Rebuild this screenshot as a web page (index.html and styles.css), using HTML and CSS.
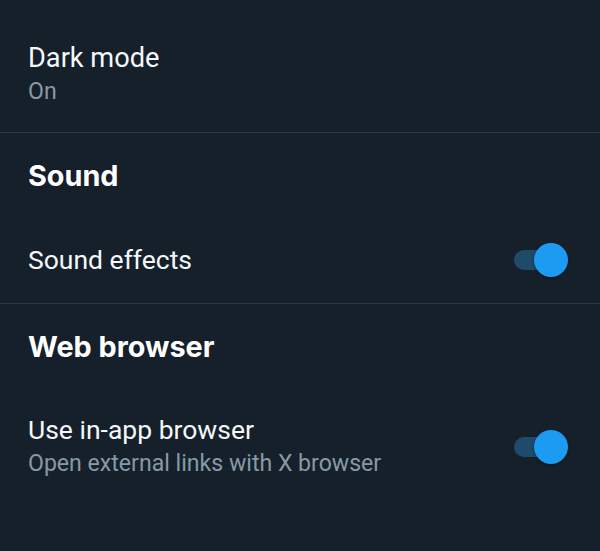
FILE: index.html
```html
<!DOCTYPE html>
<html>
<head>
<meta charset="utf-8">
<link rel="stylesheet" href="styles.css">
</head>
<body>
<div class="page">
  <div class="row row-first">
    <div class="text">
      <div class="title title-lg">Dark mode</div>
      <div class="sub">On</div>
    </div>
  </div>
  <div class="divider"></div>
  <div class="header">Sound</div>
  <div class="row row-toggle">
    <div class="text">
      <div class="title">Sound effects</div>
    </div>
    <div class="toggle"><div class="track"></div><div class="knob"></div></div>
  </div>
  <div class="divider"></div>
  <div class="header">Web browser</div>
  <div class="row row-toggle row-two">
    <div class="text">
      <div class="title">Use in-app browser</div>
      <div class="sub">Open external links with X browser</div>
    </div>
    <div class="toggle"><div class="track"></div><div class="knob"></div></div>
  </div>
</div>
</body>
</html>
```
FILE: styles.css
```css
html, body {
  margin: 0;
  padding: 0;
  background: #15202b;
}
body {
  width: 600px;
  height: 551px;
  overflow: hidden;
  font-family: Roboto, "Noto Sans", sans-serif;
  color: #ffffff;
}
.page {
  display: flex;
  flex-direction: column;
}
.row {
  display: flex;
  align-items: center;
  justify-content: space-between;
  padding: 0 32px 0 28px;
}
.row-first {
  height: 132px;
  align-items: flex-start;
}
.row-first .text {
  padding-top: 41px;
}
.title {
  font-size: 26.5px;
  line-height: 34px;
  color: #f5f8fa;
}
.title-lg {
  font-size: 27.2px;
}
.sub {
  font-size: 23.1px;
  line-height: 34px;
  color: #8899a6;
}
.divider {
  height: 1px;
  background: #2b3844;
}
.header {
  height: 84px;
  display: flex;
  align-items: center;
  padding-left: 28px;
  font-family: Inter, Roboto, sans-serif;
  font-size: 28.8px;
  font-weight: 700;
  color: #ffffff;
}
.row-toggle {
  height: 86px;
}
.row-two {
  height: 118px;
}
.toggle {
  position: relative;
  width: 54px;
  height: 34px;
  flex: none;
}
.track {
  position: absolute;
  left: 0;
  top: 7px;
  width: 46px;
  height: 20px;
  border-radius: 10px;
  background: #1e4a6b;
}
.knob {
  position: absolute;
  right: 0;
  top: 0;
  width: 34px;
  height: 34px;
  border-radius: 50%;
  background: #1d9bf0;
  box-shadow: 0 1px 3px rgba(0,0,0,0.4);
}
```
